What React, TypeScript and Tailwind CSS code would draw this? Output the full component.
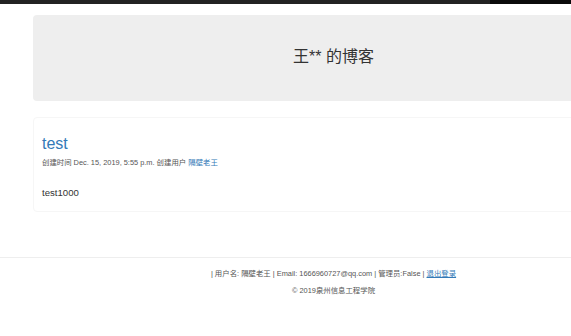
import React from "react";

export default function App() {
  const font = { fontFamily: '"Liberation Sans", "Noto Sans CJK SC", sans-serif' };
  return (
    <div className="w-[571px] h-[336px] overflow-hidden bg-white" style={font}>
      <div className="w-[667px]">
        <div className="flex h-[4px]">
          <div className="w-[490px] bg-[#222222]" />
          <div className="flex-1 bg-[#0a0a0a]" />
        </div>
        <div className="px-[33px] pt-[11px]">
          <div className="h-[86px] rounded-[4px] bg-[#eeeeee] flex items-center justify-center">
            <span className="text-[16px] text-[#333333] leading-none mt-[-2px]">王** 的博客</span>
          </div>
          <div className="mt-[16px] h-[95px] rounded-[4px] border border-[#f6f6f6] px-[8px] pt-[16px]">
            <div className="text-[16px] leading-[20px] text-[#337ab7]">test</div>
            <div className="mt-[4px] text-[7.4px] leading-[10px] text-[#555555]">
              创建时间 Dec. 15, 2019, 5:55 p.m. 创建用户 <span className="text-[#337ab7]">隔壁老王</span>
            </div>
            <div className="mt-[19px] text-[9.6px] leading-[12px] text-[#333333]">test1000</div>
          </div>
        </div>
        <div className="mt-[45px] border-t border-[#eeeeee] pt-[10px] text-center text-[7.4px] text-[#555555]">
          <div className="leading-[12px]">
            | 用户名: 隔壁老王 | Email: 1666960727@qq.com | 管理员:False | <span className="text-[#337ab7] underline">退出登录</span>
          </div>
          <div className="mt-[5px] leading-[12px]">© 2019泉州信息工程学院</div>
        </div>
      </div>
    </div>
  );
}
